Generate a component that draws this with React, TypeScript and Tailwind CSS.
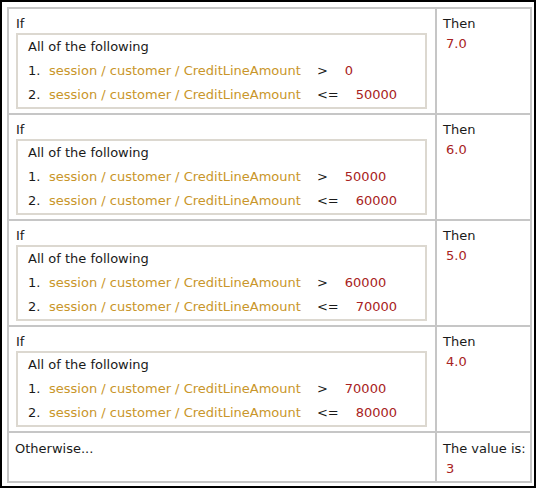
const rules = [
  { lo: '0', hi: '50000', result: '7.0' },
  { lo: '50000', hi: '60000', result: '6.0' },
  { lo: '60000', hi: '70000', result: '5.0' },
  { lo: '70000', hi: '80000', result: '4.0' }
]

function Condition({ n, op, value }: { n: number; op: string; value: string }) {
  return (
    <div className="flex h-[24px] items-center whitespace-nowrap">
      <span className="w-[21px]">{n}.</span>
      <span className="text-[#c9962a]">session / customer / CreditLineAmount</span>
      <span className="ml-[16px]">{op}</span>
      <span className="ml-[17px] text-[#a82222]">{value}</span>
    </div>
  )
}

export default function App() {
  return (
    <div className="w-[536px] h-[488px] border-2 border-black bg-white pt-[5px] pl-[5px] font-['DejaVu_Sans',sans-serif] text-[13px] text-[#1a1a1a]">
      <div className="w-[525px] border-2 border-[#c6c6c6]">
        {rules.map((r, i) => (
          <div key={i} className="flex h-[106px] border-b-2 border-[#c6c6c6]">
            <div className="w-[428px] border-r-2 border-[#c6c6c6] pl-[7px] pt-[6px]">
              <div className="leading-[18px]">If</div>
              <div className="w-[411px] h-[76px] border-2 border-[#dcd8d0] pl-[10px]">
                <div className="h-[24px] flex items-center">All of the following</div>
                <Condition n={1} op=">" value={r.lo} />
                <Condition n={2} op="<=" value={r.hi} />
              </div>
            </div>
            <div className="flex-1 pl-[6px] pt-[6px]">
              <div className="leading-[18px]">Then</div>
              <div className="ml-[3px] mt-[2px] leading-[18px] text-[#a82222]">{r.result}</div>
            </div>
          </div>
        ))}
        <div className="flex h-[48px]">
          <div className="w-[428px] border-r-2 border-[#c6c6c6] pl-[6px] pt-[7px] leading-[18px]">
            Otherwise...
          </div>
          <div className="flex-1 pl-[6px] pt-[7px]">
            <div className="leading-[18px]">The value is:</div>
            <div className="ml-[3px] mt-[2px] leading-[18px] text-[#a82222]">3</div>
          </div>
        </div>
      </div>
    </div>
  )
}
